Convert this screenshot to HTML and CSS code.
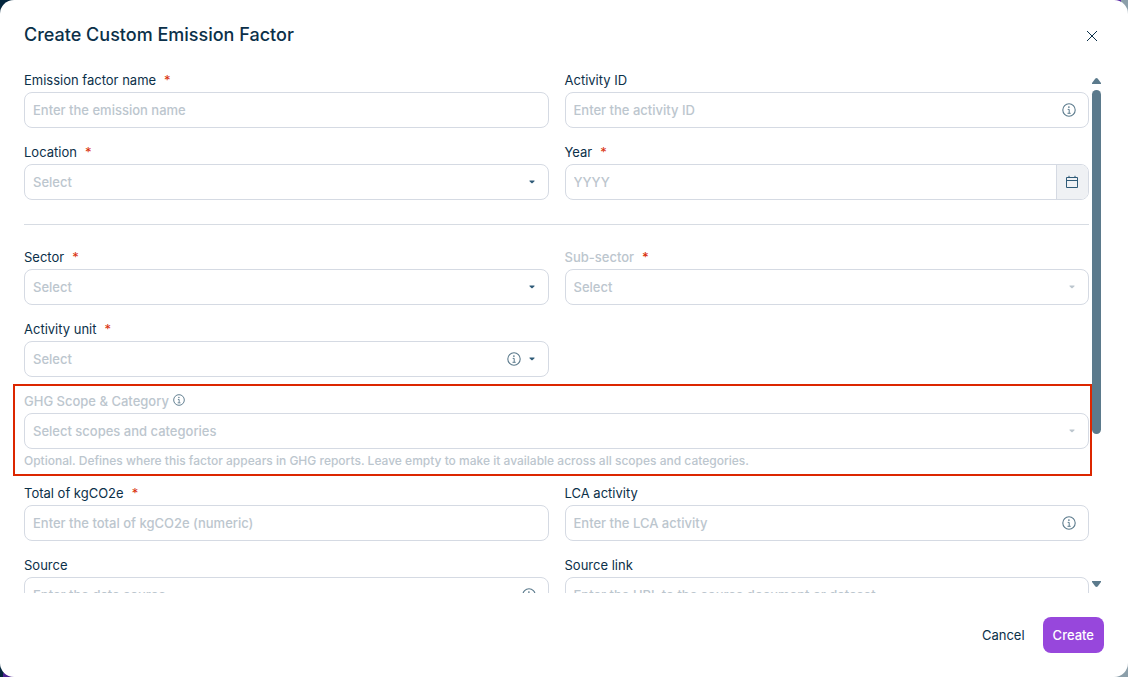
FILE: index.html
```html
<!DOCTYPE html>
<html lang="en">
<head>
    <meta charset="utf-8">
    <title>Create Custom Emission Factor</title>
    <link rel="stylesheet" href="styles.css">
</head>
<body>
    <svg class="symbols" aria-hidden="true">
        <symbol id="info" viewBox="0 0 14 14">
            <circle cx="7" cy="7" r="6.2" fill="none" stroke="currentColor" stroke-width="1.1"/>
            <circle cx="6.9" cy="4.1" r=".85" fill="currentColor"/>
            <path d="M5.7 6.4h1.5v3.8M5.5 10.3h3.2" fill="none" stroke="currentColor" stroke-width="1"/>
        </symbol>
        <symbol id="caret" viewBox="0 0 6 4">
            <path d="M.5 .5h5v.8L3.4 3.3h-.8L.5 1.3z" fill="currentColor"/>
        </symbol>
    </svg>

    <form class="dialog" role="dialog" aria-labelledby="dialogTitle">
        <header class="dialogHeader">
            <h1 id="dialogTitle">Create Custom Emission Factor</h1>
            <button type="button" class="closeButton" aria-label="Close">
                <svg width="12" height="12" viewBox="0 0 12 12"><path d="M1 1l10 10M11 1L1 11" fill="none" stroke="currentColor" stroke-width="1"/></svg>
            </button>
        </header>

        <div class="dialogBody">
            <div class="fields">
                <div class="fieldGrid">
                    <div class="field">
                        <label for="name">Emission factor name <span class="required">*</span></label>
                        <div class="control"><input id="name" type="text" placeholder="Enter the emission name"></div>
                    </div>
                    <div class="field">
                        <label for="activityId">Activity ID</label>
                        <div class="control">
                            <input id="activityId" type="text" placeholder="Enter the activity ID">
                            <div class="adornments"><svg class="infoIcon"><use href="#info"/></svg></div>
                        </div>
                    </div>
                    <div class="field">
                        <label for="location">Location <span class="required">*</span></label>
                        <div class="control">
                            <select id="location"><option>Select</option></select>
                            <div class="adornments"><svg class="caret"><use href="#caret"/></svg></div>
                        </div>
                    </div>
                    <div class="field">
                        <label for="year">Year <span class="required">*</span></label>
                        <div class="control dateControl">
                            <input id="year" type="text" placeholder="YYYY">
                            <button type="button" class="calendarButton" aria-label="Pick a year">
                                <svg width="14" height="14" viewBox="0 0 14 14"><path d="M1.5 2.5h11v10h-11zM1.5 5.5h11M4 .8v2M10 .8v2" fill="none" stroke="currentColor"/></svg>
                            </button>
                        </div>
                    </div>
                </div>

                <hr>

                <div class="fieldGrid">
                    <div class="field">
                        <label for="sector">Sector <span class="required">*</span></label>
                        <div class="control">
                            <select id="sector"><option>Select</option></select>
                            <div class="adornments"><svg class="caret"><use href="#caret"/></svg></div>
                        </div>
                    </div>
                    <div class="field disabled">
                        <label for="subSector">Sub-sector <span class="required">*</span></label>
                        <div class="control">
                            <select id="subSector" disabled><option>Select</option></select>
                            <div class="adornments"><svg class="caret"><use href="#caret"/></svg></div>
                        </div>
                    </div>
                    <div class="field">
                        <label for="unit">Activity unit <span class="required">*</span></label>
                        <div class="control">
                            <select id="unit"><option>Select</option></select>
                            <div class="adornments"><svg class="infoIcon"><use href="#info"/></svg><svg class="caret"><use href="#caret"/></svg></div>
                        </div>
                    </div>
                    <div class="field disabled wide highlighted">
                        <label for="scope">GHG Scope &amp; Category<svg class="infoIcon labelIcon"><use href="#info"/></svg></label>
                        <div class="control">
                            <select id="scope" disabled><option>Select scopes and categories</option></select>
                            <div class="adornments"><svg class="caret"><use href="#caret"/></svg></div>
                        </div>
                        <p class="help">Optional. Defines where this factor appears in GHG reports. Leave empty to make it available across all scopes and categories.</p>
                    </div>
                    <div class="field">
                        <label for="total">Total of kgCO2e <span class="required">*</span></label>
                        <div class="control"><input id="total" type="text" placeholder="Enter the total of kgCO2e (numeric)"></div>
                    </div>
                    <div class="field">
                        <label for="lca">LCA activity</label>
                        <div class="control">
                            <input id="lca" type="text" placeholder="Enter the LCA activity">
                            <div class="adornments"><svg class="infoIcon"><use href="#info"/></svg></div>
                        </div>
                    </div>
                    <div class="field">
                        <label for="source">Source</label>
                        <div class="control">
                            <input id="source" type="text" placeholder="Enter the data source">
                            <div class="adornments"><svg class="infoIcon"><use href="#info"/></svg></div>
                        </div>
                    </div>
                    <div class="field">
                        <label for="sourceLink">Source link</label>
                        <div class="control"><input id="sourceLink" type="text" placeholder="Enter the URL to the source document or dataset"></div>
                    </div>
                </div>
            </div>

            <div class="scrollbar" aria-hidden="true">
                <svg width="9" height="6" viewBox="0 0 9 6"><path d="M0 6V5L3.4.5Q4.5-.4 5.6.5L9 5v1z" fill="currentColor"/></svg>
                <div class="track"><div class="thumb"></div></div>
                <svg width="9" height="6" viewBox="0 0 9 6"><path d="M0 0v1l3.4 4.5q1.1.9 2.2 0L9 1V0z" fill="currentColor"/></svg>
            </div>
        </div>

        <footer class="dialogFooter">
            <button type="button" class="button">Cancel</button>
            <button type="submit" class="button primary">Create</button>
        </footer>
    </form>
</body>
</html>
```
FILE: styles.css
```css
* {
    box-sizing: border-box;
}

body {
    margin: 0;
    background:
        linear-gradient(#4b2391, #4b2391) 3px 100% / 12px 4px no-repeat,
        linear-gradient(#5a2aa5, #5a2aa5) calc(100% - 7px) 0 / 6px 2px no-repeat,
        linear-gradient(to right, #04263d 50%, #8c9faa 50%);
    color: #0b3049;
    font-family: Inter, "Liberation Sans", sans-serif;
    font-size: 13px;
    line-height: 16px;
}

button, input, select {
    font: inherit;
    color: inherit;
}

button {
    border: 0;
    padding: 0;
    background: none;
    cursor: pointer;
}

svg {
    display: block;
}

.symbols {
    display: none;
}

.dialog {
    display: flex;
    flex-direction: column;
    height: 100vh;
    background: white;
    border-radius: 14px;
    overflow: hidden;
}

.dialogHeader {
    display: flex;
    justify-content: space-between;
    align-items: center;
    flex: none;
    height: 72px;
    padding: 0 24px;
}

.dialogHeader h1 {
    margin: 0 0 2px;
    font-size: 18px;
    line-height: 24px;
    font-weight: 500;
}

.closeButton {
    display: grid;
    place-items: center;
    width: 24px;
    height: 24px;
}

.dialogBody {
    display: flex;
    flex: 1;
    min-height: 0;
    padding-right: 24px;
}

.fields {
    flex: 1;
    min-width: 0;
    overflow: hidden;
    padding: 0 3px 0 24px;
}

.fieldGrid {
    display: grid;
    grid-template-columns: 1fr 1fr;
    gap: 16px;
}

hr {
    height: 1px;
    margin: 24px 0;
    border: 0;
    background: #d7dce3;
}

.field {
    display: flex;
    flex-direction: column;
    gap: 4px;
}

.wide {
    grid-column: 1 / -1;
}

.field label {
    display: flex;
    align-items: center;
    height: 16px;
}

.required {
    margin-left: 8px;
    color: #d9300b;
}

.control {
    position: relative;
    display: flex;
    height: 36px;
    border: 1px solid #d5dae3;
    border-radius: 8px;
    background: white;
    overflow: hidden;
}

.control input, .control select {
    flex: 1;
    min-width: 0;
    padding: 0 8px;
    border: 0;
    outline: 0;
    background: none;
    appearance: none;
}

.control select, .control input::placeholder {
    color: #bcc6ce;
    font-weight: 500;
    opacity: 1;
}

.control select:disabled {
    opacity: 1;
}

.adornments {
    position: absolute;
    top: 0;
    right: 12px;
    display: flex;
    align-items: center;
    gap: 6px;
    height: 100%;
    color: #5b7a8c;
    pointer-events: none;
}

.infoIcon {
    width: 14px;
    height: 14px;
}

.caret {
    width: 6px;
    height: 4px;
    margin: 0 1px 0 2px;
    color: #2f5b78;
}

.labelIcon {
    width: 12px;
    height: 12px;
    margin: 0 0 2px 4px;
    color: #5b7a8c;
}

.disabled label {
    color: #bcc6ce;
    font-weight: 500;
}

.disabled .caret {
    color: #bcc6ce;
}

.calendarButton {
    display: grid;
    place-items: center;
    width: 32px;
    padding-right: 1px;
    border-left: 1px solid #d5dae3;
    background: #eff1f4;
    color: #2f5b78;
}

.help {
    margin: 0;
    color: #bcc6ce;
    font-size: 12px;
    font-weight: 450;
}

.highlighted {
    position: relative;
}

/* frame reaches past the field into the side padding */
.highlighted::after {
    content: "";
    position: absolute;
    top: -9px;
    right: -3px;
    bottom: -7px;
    left: -11px;
    border: 2px solid #dc2600;
    pointer-events: none;
}

.scrollbar {
    display: flex;
    flex-direction: column;
    gap: 6px;
    width: 12px;
    padding: 6px 0;
    color: #5b7a8c;
}

.track {
    flex: 1;
}

.thumb {
    width: 9px;
    height: 71%;
    border-radius: 5px;
    background: #5b7a8c;
}

.dialogFooter {
    display: flex;
    justify-content: flex-end;
    gap: 8px;
    flex: none;
    padding: 24px;
}

.button {
    height: 36px;
    padding: 0 10px;
    border-radius: 8px;
}

.primary {
    background: #9747dc;
    color: white;
    font-weight: 500;
}
```
